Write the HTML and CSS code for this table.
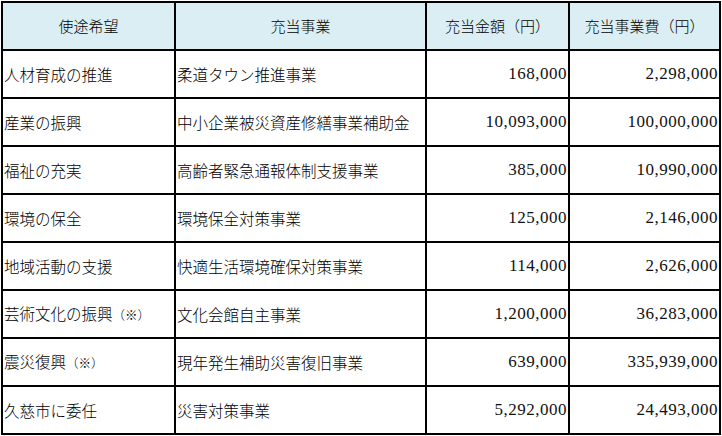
FILE: index.html
```html
<!DOCTYPE html>
<html lang="ja">
<head>
<meta charset="utf-8">
<link rel="stylesheet" href="styles.css">
</head>
<body>
<table class="tbl">
  <colgroup>
    <col class="c1"><col class="c2"><col class="c3"><col class="c4">
  </colgroup>
  <thead>
    <tr>
      <th>使途希望</th>
      <th>充当事業</th>
      <th>充当金額（円）</th>
      <th>充当事業費（円）</th>
    </tr>
  </thead>
  <tbody>
    <tr><td>人材育成の推進</td><td>柔道タウン推進事業</td><td class="num">168,000</td><td class="num">2,298,000</td></tr>
    <tr><td>産業の振興</td><td>中小企業被災資産修繕事業補助金</td><td class="num">10,093,000</td><td class="num">100,000,000</td></tr>
    <tr><td>福祉の充実</td><td>高齢者緊急通報体制支援事業</td><td class="num">385,000</td><td class="num">10,990,000</td></tr>
    <tr><td>環境の保全</td><td>環境保全対策事業</td><td class="num">125,000</td><td class="num">2,146,000</td></tr>
    <tr><td>地域活動の支援</td><td>快適生活環境確保対策事業</td><td class="num">114,000</td><td class="num">2,626,000</td></tr>
    <tr><td>芸術文化の振興<span class="note">（※）</span></td><td>文化会館自主事業</td><td class="num">1,200,000</td><td class="num">36,283,000</td></tr>
    <tr><td>震災復興<span class="note">（※）</span></td><td>現年発生補助災害復旧事業</td><td class="num">639,000</td><td class="num">335,939,000</td></tr>
    <tr><td>久慈市に委任</td><td>災害対策事業</td><td class="num">5,292,000</td><td class="num">24,493,000</td></tr>
  </tbody>
</table>
</body>
</html>
```

FILE: styles.css
```css
html, body {
  margin: 0;
  padding: 0;
  background: #ffffff;
}
body {
  padding: 1px 0 0 1px;
}
.tbl {
  border-collapse: separate;
  border-spacing: 0;
  table-layout: fixed;
  width: 720px;
  border-left: 2px solid #000;
  border-top: 2px solid #000;
  font-family: "Noto Sans CJK JP", sans-serif;
  font-size: 15.5px;
  font-weight: 300;
  color: #000;
}
.c1 { width: 173px; }
.c2 { width: 251px; }
.c3 { width: 143px; }
.c4 { width: 151px; }
.tbl th,
.tbl td {
  box-sizing: border-box;
  height: 48px;
  padding: 0 1px 0 1px;
  border-right: 2px solid #000;
  border-bottom: 2px solid #000;
  vertical-align: middle;
  white-space: nowrap;
  overflow: hidden;
  line-height: 18px;
}
.tbl th {
  background: #daeef3;
  font-weight: 300;
  font-size: 15px;
  text-align: center;
}
.tbl td {
  text-align: left;
}
.tbl td.num {
  text-align: right;
  font-family: "Liberation Serif", serif;
  font-weight: normal;
  font-size: 17px;
  letter-spacing: 0.5px;
  color: #111;
  padding-right: 1px;
}
.note {
  font-size: 12.5px;
}
```
